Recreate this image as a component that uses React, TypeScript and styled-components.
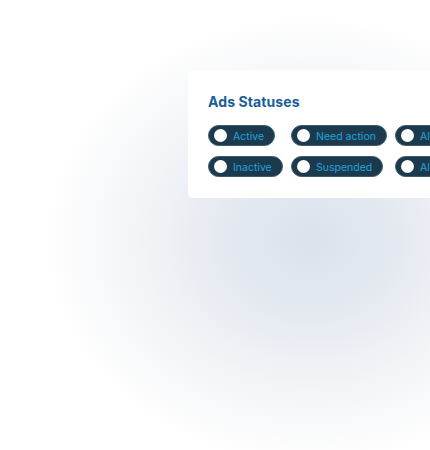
import React from "react";
import styled, { createGlobalStyle } from "styled-components";

const Global = createGlobalStyle`
  html, body { margin: 0; padding: 0; }
  body {
    width: 430px;
    height: 450px;
    overflow: hidden;
    font-family: Inter, "Noto Sans", sans-serif;
    background: #ffffff;
  }
`;

const Page = styled.div`
  width: 430px;
  height: 450px;
  overflow: hidden;
  box-sizing: border-box;
  padding: 70px 0 0 188px;
  background: radial-gradient(ellipse 265px 225px at 310px 240px, #dbe2ec 0%, #e5eaf1 35%, #f2f4f7 65%, #ffffff 100%);
`;

const Card = styled.div`
  width: 320px;
  box-sizing: border-box;
  background: #ffffff;
  border-radius: 5px;
  padding: 23px 20px 21px 20px;
  display: flex;
  flex-direction: column;
  gap: 14px;
`;

const Title = styled.h2`
  margin: 0;
  font-size: 14px;
  line-height: 18px;
  font-weight: 700;
  color: #1a5e95;
  letter-spacing: 0.1px;
`;

const Grid = styled.div`
  display: grid;
  grid-template-columns: 74px 95px 95px;
  column-gap: 9px;
  row-gap: 10px;
  justify-items: start;
`;

const Pill = styled.div`
  height: 21px;
  box-sizing: border-box;
  display: inline-flex;
  align-items: center;
  gap: 6px;
  padding: 0 10px 0 5px;
  border-radius: 11px;
  background: #1b3a4d;
  border: 1px solid #41596a;
`;

const Dot = styled.span`
  width: 13px;
  height: 13px;
  border-radius: 50%;
  background: #ffffff;
  flex: none;
`;

const Label = styled.span`
  font-size: 10.5px;
  line-height: 13px;
  padding-top: 1px;
  color: #22a3dc;
  white-space: nowrap;
`;

const items = ["Active", "Need action", "All ads", "Inactive", "Suspended", "All statuses"];

export default function App() {
  return (
    <>
      <Global />
      <Page>
        <Card>
          <Title>Ads Statuses</Title>
          <Grid>
            {items.map((t) => (
              <Pill key={t}>
                <Dot />
                <Label>{t}</Label>
              </Pill>
            ))}
          </Grid>
        </Card>
      </Page>
    </>
  );
}
